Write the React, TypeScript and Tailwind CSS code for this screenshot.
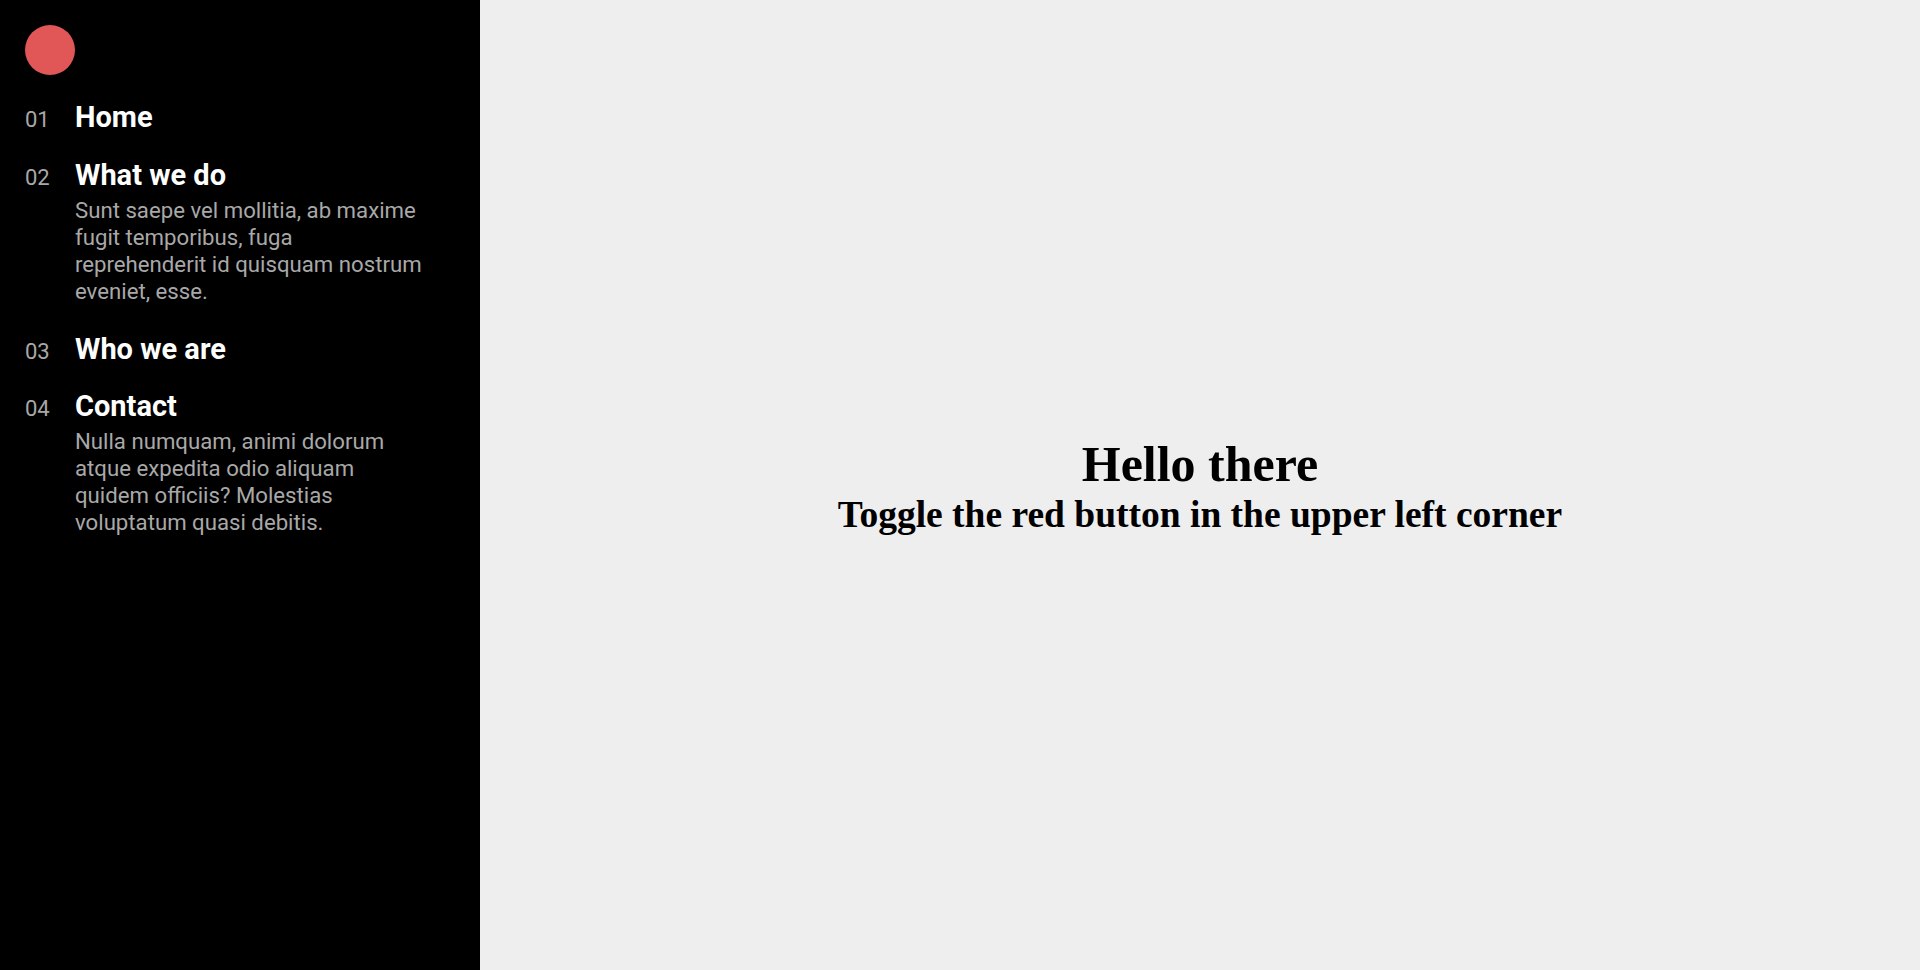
const items = [
  { num: "01", title: "Home" },
  {
    num: "02",
    title: "What we do",
    text: "Sunt saepe vel mollitia, ab maxime fugit temporibus, fuga reprehenderit id quisquam nostrum eveniet, esse.",
  },
  { num: "03", title: "Who we are" },
  {
    num: "04",
    title: "Contact",
    text: "Nulla numquam, animi dolorum atque expedita odio aliquam quidem officiis? Molestias voluptatum quasi debitis.",
  },
];

function Sidebar() {
  return (
    <aside className="flex h-screen w-[480px] shrink-0 flex-col bg-black px-[25px] pt-[25px] font-['Roboto',sans-serif]">
      <button
        aria-label="Toggle menu"
        className="h-[50px] w-[50px] rounded-full bg-[#e15656]"
      />
      <nav className="mt-[25px] flex flex-col gap-[23px]">
        {items.map((item) => (
          <div key={item.num} className="flex items-baseline">
            <span className="w-[50px] shrink-0 text-[22px] leading-[1.2] text-[#a8a8a8]">
              {item.num}
            </span>
            <div className="flex flex-col">
              <a
                href="#"
                className="text-[29px] leading-[1.2] font-bold text-white"
              >
                {item.title}
              </a>
              {item.text && (
                <p className="mt-[4px] mb-[4px] max-w-[350px] text-[22.2px] leading-[27px] text-[#a8a8a8]">
                  {item.text}
                </p>
              )}
            </div>
          </div>
        ))}
      </nav>
    </aside>
  );
}

export default function App() {
  return (
    <div className="flex h-screen w-full overflow-hidden">
      <Sidebar />
      <main className="flex flex-1 flex-col items-center justify-center bg-[#eeeeee] font-['Liberation_Serif','Times_New_Roman',serif] text-black">
        <h1 className="text-[50px] leading-[normal] font-bold">Hello there</h1>
        <h2 className="text-[37.5px] leading-[normal] font-bold">
          Toggle the red button in the upper left corner
        </h2>
      </main>
    </div>
  );
}
